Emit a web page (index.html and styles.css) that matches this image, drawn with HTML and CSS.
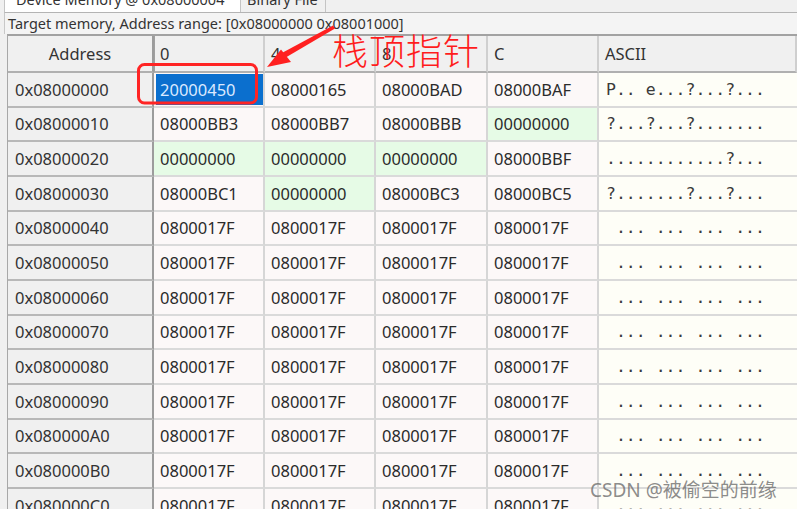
FILE: index.html
```html
<!DOCTYPE html>
<html lang="en">
<head>
<meta charset="utf-8">
<title>Device Memory</title>
<link rel="stylesheet" href="styles.css">
</head>
<body>
<div class="window">
  <div class="tabs">
    <div class="tab tab-active"><span class="tab-label">Device Memory @ 0x08000004</span></div>
    <div class="tab"><span class="tab-label">Binary File</span></div>
  </div>
  <div class="info">Target memory, Address range: [0x08000000 0x08001000]</div>
  <div class="table-area">
    <div class="grid">
      <div class="hd hd-addr">Address</div>
      <div class="hd hd-first">0</div>
      <div class="hd">4</div>
      <div class="hd">8</div>
      <div class="hd">C</div>
      <div class="hd">ASCII</div>

      <div class="addr">0x08000000</div>
      <div class="cell"><span class="sel">20000450</span></div>
      <div class="cell">08000165</div>
      <div class="cell">08000BAD</div>
      <div class="cell">08000BAF</div>
      <div class="ascii">P.. e...?...?...</div>

      <div class="addr">0x08000010</div>
      <div class="cell">08000BB3</div>
      <div class="cell">08000BB7</div>
      <div class="cell">08000BBB</div>
      <div class="cell zero">00000000</div>
      <div class="ascii">?...?...?.......</div>

      <div class="addr">0x08000020</div>
      <div class="cell zero">00000000</div>
      <div class="cell zero">00000000</div>
      <div class="cell zero">00000000</div>
      <div class="cell">08000BBF</div>
      <div class="ascii">............?...</div>

      <div class="addr">0x08000030</div>
      <div class="cell">08000BC1</div>
      <div class="cell zero">00000000</div>
      <div class="cell">08000BC3</div>
      <div class="cell">08000BC5</div>
      <div class="ascii">?.......?...?...</div>

      <div class="addr">0x08000040</div>
      <div class="cell">0800017F</div>
      <div class="cell">0800017F</div>
      <div class="cell">0800017F</div>
      <div class="cell">0800017F</div>
      <div class="ascii"> ... ... ... ...</div>

      <div class="addr">0x08000050</div>
      <div class="cell">0800017F</div>
      <div class="cell">0800017F</div>
      <div class="cell">0800017F</div>
      <div class="cell">0800017F</div>
      <div class="ascii"> ... ... ... ...</div>

      <div class="addr">0x08000060</div>
      <div class="cell">0800017F</div>
      <div class="cell">0800017F</div>
      <div class="cell">0800017F</div>
      <div class="cell">0800017F</div>
      <div class="ascii"> ... ... ... ...</div>

      <div class="addr">0x08000070</div>
      <div class="cell">0800017F</div>
      <div class="cell">0800017F</div>
      <div class="cell">0800017F</div>
      <div class="cell">0800017F</div>
      <div class="ascii"> ... ... ... ...</div>

      <div class="addr">0x08000080</div>
      <div class="cell">0800017F</div>
      <div class="cell">0800017F</div>
      <div class="cell">0800017F</div>
      <div class="cell">0800017F</div>
      <div class="ascii"> ... ... ... ...</div>

      <div class="addr">0x08000090</div>
      <div class="cell">0800017F</div>
      <div class="cell">0800017F</div>
      <div class="cell">0800017F</div>
      <div class="cell">0800017F</div>
      <div class="ascii"> ... ... ... ...</div>

      <div class="addr">0x080000A0</div>
      <div class="cell">0800017F</div>
      <div class="cell">0800017F</div>
      <div class="cell">0800017F</div>
      <div class="cell">0800017F</div>
      <div class="ascii"> ... ... ... ...</div>

      <div class="addr">0x080000B0</div>
      <div class="cell">0800017F</div>
      <div class="cell">0800017F</div>
      <div class="cell">0800017F</div>
      <div class="cell">0800017F</div>
      <div class="ascii"> ... ... ... ...</div>

      <div class="addr">0x080000C0</div>
      <div class="cell">0800017F</div>
      <div class="cell">0800017F</div>
      <div class="cell">0800017F</div>
      <div class="cell">0800017F</div>
      <div class="ascii"> ... ... ... ...</div>
    </div>
  </div>

  <svg class="annot" width="797" height="509" viewBox="0 0 797 509" aria-hidden="true">
    <rect x="138.5" y="64.5" width="118" height="38.5" rx="6" ry="6" fill="none" stroke="#ff2424" stroke-width="3"/>
    <polygon fill="#ff2020" points="333,25.5 335,28.5 284,58.5 280,54"/>
    <polygon fill="#ff2020" points="267,67 281,49.5 291,62"/>
  </svg>
  <div class="note">栈顶指针</div>
  <div class="watermark">CSDN @被偷空的前缘</div>
</div>
</body>
</html>
```

FILE: styles.css
```css
html, body {
  margin: 0;
  padding: 0;
}

body {
  background: #f0f0f0;
  font-family: "Noto Sans", "Noto Sans CJK SC", sans-serif;
  color: #2b2b2b;
  overflow: hidden;
}

.window {
  position: relative;
  width: 797px;
  height: 509px;
  overflow: hidden;
  background: #f0f0f0;
}

/* Tabs (cut off at the top) */
.tabs {
  display: flex;
  height: 12px;
  padding-left: 4px;
}

.tab {
  display: flex;
  align-items: flex-end;
  height: 12px;
  padding: 0 7px 3px 6px;
  box-sizing: border-box;
  overflow: hidden;
  border-right: 1px solid #c4c4c4;
  font-size: 14.5px;
  color: #333;
}

.tab-active {
  width: 237px;
  padding-left: 11px;
  background: #ffffff;
  border-left: 1px solid #c4c4c4;
}

.tab-label {
  display: block;
  line-height: 20px;
  white-space: nowrap;
}

/* Info line */
.info {
  height: 22px;
  box-sizing: border-box;
  margin-left: 4px;
  padding-left: 3px;
  border-top: 1px solid #b4b4b4;
  border-left: 1px solid #c8c8c8;
  background: #f4f4f4;
  font-size: 14.5px;
  line-height: 20px;
  color: #333;
  white-space: nowrap;
}

/* Table */
.table-area {
  padding-left: 7px;
}

.grid {
  display: grid;
  grid-template-columns: 146px 111px 111px 112px 111px 1fr;
  grid-template-rows: 37px;
  grid-auto-rows: 34.67px;
  border-top: 2px solid #a2a2a2;
  border-left: 1px solid #a8a8a8;
  font-size: 16.5px;
}

.hd,
.addr,
.cell,
.ascii {
  display: flex;
  align-items: center;
  box-sizing: border-box;
  white-space: nowrap;
  overflow: hidden;
}

.hd {
  background: #f0f0f0;
  border-bottom: 2px solid #b0b0b0;
  border-right: 2px solid #cfcfcf;
  padding-left: 6px;
  color: #333;
}

.hd-addr {
  justify-content: center;
  padding-left: 0;
  border-right: 2px solid #9c9c9c;
}

.hd-first {
  border-left: 1px solid #a0a0a0;
  padding-left: 5px;
}

.addr {
  background: #f0f0f0;
  padding-left: 7px;
  border-bottom: 2px solid #b8b8b8;
  border-right: 2px solid #9c9c9c;
  color: #333;
}

.cell {
  background: #fcf8f8;
  padding-left: 6px;
  border-bottom: 2px solid #dadada;
  border-right: 2px solid #d6d6d6;
}

.cell.zero {
  background: #e6fbe6;
}

.sel {
  display: flex;
  align-items: center;
  align-self: stretch;
  margin: 1px 0 1px -4px;
  padding-left: 4px;
  width: 107px;
  background: #0b6fce;
  color: #dbe9ff;
}

.ascii {
  background: #fefef7;
  padding-left: 7px;
  border-bottom: 2px solid #dadada;
  font-family: "DejaVu Sans Mono", monospace;
  font-size: 16.5px;
  white-space: pre;
  color: #3a3a3a;
}

/* Annotations */
.annot {
  position: absolute;
  left: 0;
  top: 0;
  pointer-events: none;
}

.note {
  position: absolute;
  left: 332px;
  top: 27px;
  font-family: "Noto Sans CJK SC", sans-serif;
  font-size: 36px;
  font-weight: 300;
  line-height: 44px;
  letter-spacing: 1px;
  color: #ff1c1c;
  white-space: nowrap;
}

.watermark {
  position: absolute;
  left: 590px;
  top: 477px;
  font-family: "Noto Sans", "Noto Sans CJK SC", sans-serif;
  font-size: 19px;
  line-height: 26px;
  color: rgba(110, 110, 110, 0.8);
  white-space: nowrap;
}
```
